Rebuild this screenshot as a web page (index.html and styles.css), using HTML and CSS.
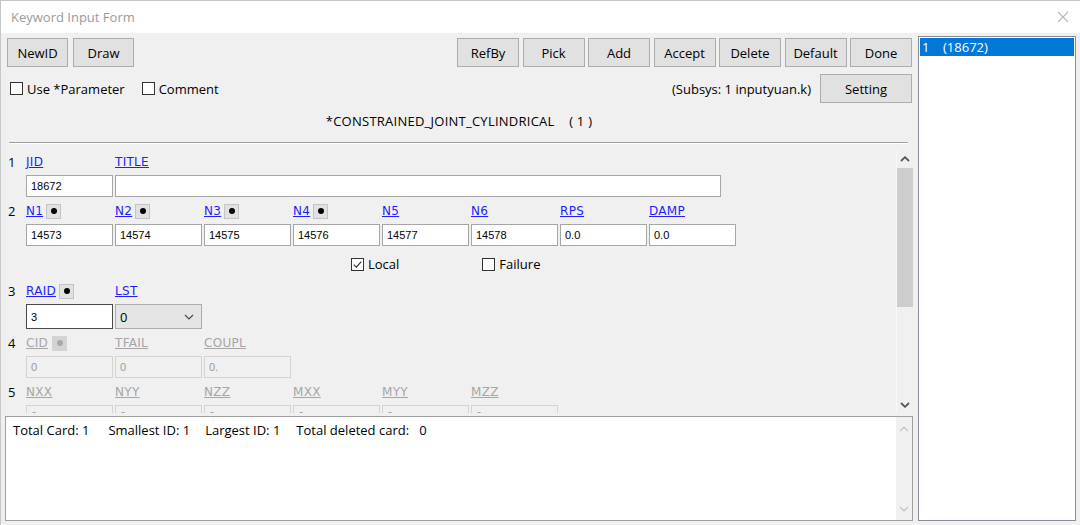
FILE: index.html
```html
<!DOCTYPE html>
<html>
<head>
<meta charset="utf-8">
<title>Keyword Input Form</title>
<link rel="stylesheet" href="styles.css">
</head>
<body>
<div class="window">
  <div class="titlebar">
    <span class="title">Keyword Input Form</span>
    <svg class="close" width="12" height="12" viewBox="0 0 12 12"><path d="M1 1L11 11M11 1L1 11" stroke="#b8b8b8" stroke-width="1.1" fill="none"/></svg>
  </div>
  <div class="client">
    <div class="main">
      <div class="toolbar">
        <div class="group group-left">
          <button class="btn">NewID</button>
          <button class="btn">Draw</button>
        </div>
        <div class="group group-right">
          <button class="btn">RefBy</button>
          <button class="btn">Pick</button>
          <button class="btn">Add</button>
          <button class="btn">Accept</button>
          <button class="btn">Delete</button>
          <button class="btn">Default</button>
          <button class="btn">Done</button>
        </div>
      </div>
      <div class="optrow">
        <label class="chk"><span class="box"></span>Use *Parameter</label>
        <label class="chk chk-comment"><span class="box"></span>Comment</label>
        <span class="subsys">(Subsys: 1 inputyuan.k)</span>
        <button class="btn btn-setting">Setting</button>
      </div>
      <div class="kwtitle">*CONSTRAINED_JOINT_CYLINDRICAL    ( 1 )</div>
      <div class="sep"></div>
      <div class="scrollpane">
        <div class="cards">
          <div class="card">
            <span class="num">1</span>
            <div class="lbl"><a class="kw">JID</a></div>
            <div class="lbl"><a class="kw">TITLE</a></div>
            <input class="inp" value="18672">
            <input class="inp inp-title" value="">
          </div>
          <div class="card">
            <span class="num">2</span>
            <div class="lbl"><a class="kw">N1</a><span class="dot"></span></div>
            <div class="lbl"><a class="kw">N2</a><span class="dot"></span></div>
            <div class="lbl"><a class="kw">N3</a><span class="dot"></span></div>
            <div class="lbl"><a class="kw">N4</a><span class="dot"></span></div>
            <div class="lbl"><a class="kw">N5</a></div>
            <div class="lbl"><a class="kw">N6</a></div>
            <div class="lbl"><a class="kw">RPS</a></div>
            <div class="lbl"><a class="kw">DAMP</a></div>
            <input class="inp" value="14573">
            <input class="inp" value="14574">
            <input class="inp" value="14575">
            <input class="inp" value="14576">
            <input class="inp" value="14577">
            <input class="inp" value="14578">
            <input class="inp" value="0.0">
            <input class="inp" value="0.0">
            <div class="optline">
              <label class="chk"><span class="box checked"><svg width="11" height="11" viewBox="0 0 11 11"><path d="M1.8 5.6L4.3 8.1L9.3 2.6" stroke="#333" stroke-width="1.2" fill="none"/></svg></span>Local</label>
              <label class="chk chk-failure"><span class="box"></span>Failure</label>
            </div>
          </div>
          <div class="card card-tall">
            <span class="num">3</span>
            <div class="lbl"><a class="kw">RAID</a><span class="dot"></span></div>
            <div class="lbl"><a class="kw">LST</a></div>
            <input class="inp inp-focus" value="3">
            <div class="select"><span>0</span><svg width="10" height="6" viewBox="0 0 10 6"><path d="M1 1L5 5L9 1" stroke="#444" stroke-width="1.1" fill="none"/></svg></div>
          </div>
          <div class="card card-off">
            <span class="num">4</span>
            <div class="lbl"><a class="kw">CID</a><span class="dot dot-off"></span></div>
            <div class="lbl"><a class="kw">TFAIL</a></div>
            <div class="lbl"><a class="kw">COUPL</a></div>
            <input class="inp" value="0" disabled>
            <input class="inp" value="0" disabled>
            <input class="inp" value="0." disabled>
          </div>
          <div class="card card-off">
            <span class="num">5</span>
            <div class="lbl"><a class="kw">NXX</a></div>
            <div class="lbl"><a class="kw">NYY</a></div>
            <div class="lbl"><a class="kw">NZZ</a></div>
            <div class="lbl"><a class="kw">MXX</a></div>
            <div class="lbl"><a class="kw">MYY</a></div>
            <div class="lbl"><a class="kw">MZZ</a></div>
            <input class="inp" value="0" disabled>
            <input class="inp" value="0" disabled>
            <input class="inp" value="0" disabled>
            <input class="inp" value="0" disabled>
            <input class="inp" value="0" disabled>
            <input class="inp" value="0" disabled>
          </div>
        </div>
        <div class="vscroll">
          <div class="arrow"><svg width="10" height="6" viewBox="0 0 10 6"><path d="M1 5L5 1.2L9 5" stroke="#555" stroke-width="1.8" fill="none"/></svg></div>
          <div class="track"><div class="thumb"></div></div>
          <div class="arrow"><svg width="10" height="6" viewBox="0 0 10 6"><path d="M1 1L5 4.8L9 1" stroke="#555" stroke-width="1.8" fill="none"/></svg></div>
        </div>
      </div>
      <div class="log">
        <div class="logtext">
          <span>Total Card: 1</span><span class="g1">Smallest ID: 1</span><span class="g2">Largest ID: 1</span><span class="g3">Total deleted card:&nbsp;&nbsp; 0</span>
        </div>
        <div class="logscroll">
          <svg width="10" height="6" viewBox="0 0 10 6"><path d="M1 5L5 1.2L9 5" stroke="#c4c4c4" stroke-width="1.3" fill="none"/></svg>
          <svg width="10" height="6" viewBox="0 0 10 6"><path d="M1 1L5 4.8L9 1" stroke="#c4c4c4" stroke-width="1.3" fill="none"/></svg>
        </div>
      </div>
    </div>
    <div class="side">
      <div class="listbox">
        <div class="item selected"><span class="item-no">1</span><span>(18672)</span></div>
      </div>
    </div>
  </div>
</div>
</body>
</html>
```

FILE: styles.css
```css
* { box-sizing: border-box; }
html, body { margin: 0; padding: 0; }
body {
  width: 1080px;
  height: 525px;
  overflow: hidden;
  background: #f0f0f0;
  font-family: "Open Sans", "Noto Sans", sans-serif;
  font-size: 13px;
  color: #000;
}
.window {
  width: 1080px;
  height: 525px;
  display: flex;
  flex-direction: column;
  border-top: 1px solid #c6c6c6;
  border-left: 1px solid #c6c6c6;
}
.titlebar {
  height: 32px;
  flex: none;
  background: #fff;
  display: flex;
  align-items: center;
  justify-content: space-between;
  padding: 0 11px 0 10px;
}
.title { color: #9b9b9b; font-size: 13px; }
.client { flex: 1; display: flex; min-height: 0; }
.main {
  width: 915px;
  flex: none;
  display: flex;
  flex-direction: column;
  padding: 5px 3px 4px 4px;
}
.toolbar { display: flex; justify-content: space-between; padding: 0 1px 0 2px; }
.group { display: flex; }
.group-left { gap: 5px; }
.group-right { gap: 3.5px; }
.btn {
  height: 29px;
  width: 62px;
  margin: 0;
  padding: 0;
  background: #e1e1e1;
  border: 1px solid #adadad;
  font-family: inherit;
  font-size: 13px;
  color: #000;
}
.group-left .btn { width: 61px; }
.optrow { margin-top: 7px; height: 29px; display: flex; align-items: center; padding: 0 1px 0 5px; }
.chk { display: flex; align-items: center; gap: 4px; }
.chk-comment { margin-left: 17px; }
.box {
  width: 13px;
  height: 13px;
  border: 1px solid #333;
  background: #fff;
  display: flex;
  align-items: center;
  justify-content: center;
}
.subsys { margin-left: auto; margin-right: 9px; }
.btn-setting { width: 92px; }
.kwtitle { margin-top: 9px; height: 18px; line-height: 18px; text-align: center; white-space: pre; letter-spacing: 0.25px; }
.sep { margin: 12px 5px 0 4px; height: 2px; border-top: 1px solid #a0a0a0; border-bottom: 1px solid #fff; }
.scrollpane { margin-top: 6px; height: 263px; flex: none; display: flex; overflow: hidden; }
.cards { flex: 1; padding: 4px 0 0 3px; overflow: hidden; }
.card {
  display: grid;
  grid-template-columns: 16px repeat(8, 87px);
  grid-template-rows: 16px 22px;
  column-gap: 2px;
  row-gap: 5px;
  margin-bottom: 6px;
}
.card-tall { grid-template-rows: 16px 25px; }
.num { grid-row: 1 / span 2; line-height: 16px; font-size: 13px; }
.lbl { grid-row: 1; display: flex; align-items: center; gap: 3px; }
.kw {
  font-family: "DejaVu Sans", sans-serif;
  font-size: 12px;
  color: #1f1fff;
  text-decoration: underline;
  line-height: 16px;
  letter-spacing: 0.3px;
}
.dot {
  width: 15px;
  height: 15px;
  background: #e1e1e1;
  border: 1px solid #c4c4c4;
  display: flex;
  align-items: center;
  justify-content: center;
}
.dot::after { content: ""; width: 6px; height: 6px; border-radius: 50%; background: #000; }
.card-off .dot { margin-left: 1px; background: #d4d4d4; border-color: #d4d4d4; }
.card-off .dot::after { background: #a8a8a8; }
.inp {
  grid-row: 2;
  width: 87px;
  height: 22px;
  margin: 0;
  padding: 0 4px;
  border: 1px solid #a6a6a6;
  background: #fff;
  font-family: "Liberation Sans", Arial, sans-serif;
  font-size: 11px;
  color: #000;
  outline: none;
}
.inp-title { grid-column: span 7; width: 606px; justify-self: start; }
.inp-focus { height: 25px; border-color: #4a4a4a; }
.select {
  grid-row: 2;
  width: 87px;
  height: 25px;
  background: #e5e5e5;
  border: 1px solid #acacac;
  display: flex;
  align-items: center;
  justify-content: space-between;
  padding: 0 7px 0 4px;
  font-size: 13px;
}
.optline { grid-row: 3; grid-column: 2 / -1; height: 26px; display: flex; align-items: center; padding-left: 325px; }
.chk-failure { margin-left: 83px; }
.card-off .kw { color: #a6a6a6; }
.card-off .inp { background: #f0f0f0; border-color: #d4d4d4; color: #9a9a9a; }
.vscroll {
  width: 17px;
  flex: none;
  display: flex;
  flex-direction: column;
  border-left: 1px solid #f8f8f8;
}
.arrow { height: 17px; flex: none; display: flex; align-items: center; justify-content: center; }
.track { flex: 1; }
.thumb { margin-top: 1px; height: 139px; background: #cdcdcd; }
.log {
  margin-top: 3px;
  flex: 1;
  display: flex;
  background: #fff;
  border: 1px solid #a0a0a0;
}
.logtext { flex: 1; padding: 4px 7px; line-height: 18px; white-space: nowrap; }
.g1 { margin-left: 19px; }
.g2 { margin-left: 15px; }
.g3 { margin-left: 16px; }
.logscroll {
  width: 16px;
  flex: none;
  background: #f0f0f0;
  display: flex;
  flex-direction: column;
  align-items: center;
  justify-content: space-between;
  padding: 9px 0 8px;
}
.side { flex: 1; padding: 3px 4px 4px 2px; display: flex; }
.listbox {
  flex: 1;
  background: #fff;
  border: 1px solid #8a8c99;
  padding: 1px;
}
.item { height: 18px; line-height: 18px; padding-left: 2px; font-size: 13px; white-space: nowrap; }
.selected { background: #0078d7; color: #fff; }
.item-no { display: inline-block; width: 21px; }
```
